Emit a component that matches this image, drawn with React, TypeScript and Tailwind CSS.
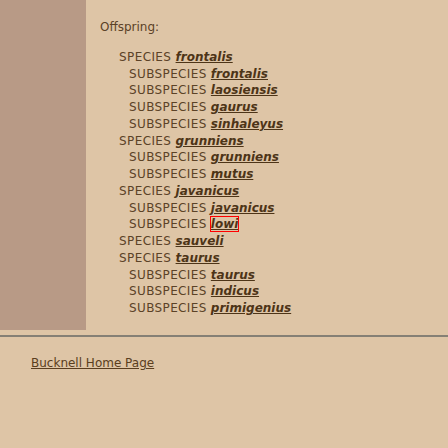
const tree: [string, string[]][] = [
  ["frontalis", ["frontalis", "laosiensis", "gaurus", "sinhaleyus"]],
  ["grunniens", ["grunniens", "mutus"]],
  ["javanicus", ["javanicus", "lowi"]],
  ["sauveli", []],
  ["taurus", ["taurus", "indicus", "primigenius"]],
];

function Name({ name }: { name: string }) {
  return (
    <a
      href="#"
      className={`font-bold italic underline text-[#4d3417] ${
        name === "lowi" ? "outline outline-1 outline-[#ff0000]" : ""
      }`}
    >
      {name}
    </a>
  );
}

export default function App() {
  return (
    <div className="min-h-[448px] bg-[#dec5a6] font-['DejaVu_Sans',Verdana,sans-serif] text-[12px] leading-[16.75px] text-[#5b4227]">
      <div className="flex">
        <div className="w-[86px] h-[330px] bg-[#b89a86]" />
        <div className="pl-[14px] pt-[19px]">
          <div>Offspring:</div>
          <div className="mt-[13px] pl-[19px]">
            {tree.map(([sp, subs]) => (
              <div key={sp}>
                <div>
                  <span className="tracking-[0.4px]">SPECIES </span>
                  <Name name={sp} />
                </div>
                {subs.map((s) => (
                  <div key={s} className="pl-[10px]">
                    <span className="tracking-[0.37px]">SUBSPECIES </span>
                    <Name name={s} />
                  </div>
                ))}
              </div>
            ))}
          </div>
        </div>
      </div>
      <div className="mt-[5px] h-[2px] bg-[#858075]" />
      <div className="pl-[31px] pt-[18px]">
        <a href="#" className="underline text-[#5a3e20]">
          Bucknell Home Page
        </a>
      </div>
    </div>
  );
}
